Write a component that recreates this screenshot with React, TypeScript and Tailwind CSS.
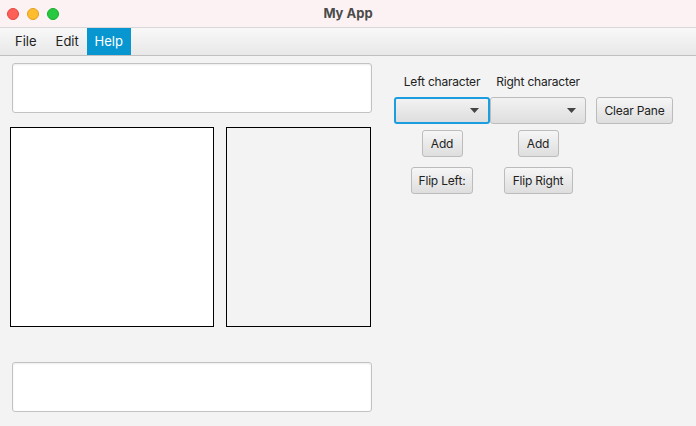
import React from "react";

const font = { fontFamily: "Inter, Roboto, 'Liberation Sans', sans-serif" };

function Combo({ focused }: { focused?: boolean }) {
  return (
    <div
      className={`w-[96px] h-[27px] rounded-[3px] flex items-center justify-end pr-[9px] bg-gradient-to-b from-[#f2f2f2] to-[#dedede] ${
        focused
          ? "border-[2px] border-[#1a9ee0]"
          : "border border-[#bcbcbc]"
      }`}
    >
      <svg width="9" height="5" viewBox="0 0 9 5">
        <path d="M0 0 L9 0 L4.5 5 Z" fill="#444" />
      </svg>
    </div>
  );
}

function Btn({ label, w }: { label: string; w: string }) {
  return (
    <div
      className={`${w} h-[27px] rounded-[3px] border border-[#bcbcbc] bg-gradient-to-b from-[#f6f6f6] to-[#dedede] flex items-center justify-center text-[12px] text-[#222] tracking-[-0.2px]`}
    >
      {label}
    </div>
  );
}

export default function App() {
  return (
    <div className="w-[696px] h-[426px] bg-[#f3f3f3] flex flex-col overflow-hidden" style={font}>
      {/* Title bar */}
      <div className="h-[28px] bg-[#fdf2f3] border-b border-[#d8d8d8] flex items-center relative">
        <div className="flex gap-[8px] pl-[7px]">
          <span className="w-[12px] h-[12px] rounded-full bg-[#fe5f57] border border-[#e2463f]" />
          <span className="w-[12px] h-[12px] rounded-full bg-[#febc2e] border border-[#e1a116]" />
          <span className="w-[12px] h-[12px] rounded-full bg-[#28c840] border border-[#14ae2a]" />
        </div>
        <div className="absolute inset-0 flex items-center justify-center text-[13px] font-bold text-[#4a4a4a]">
          My App
        </div>
      </div>

      {/* Menu bar */}
      <div className="h-[28px] flex items-stretch bg-gradient-to-b from-[#f8f8f8] to-[#e8e8e8] border-b border-[#c0c0c0] text-[13px] text-[#222]">
        <div className="pl-[5px] flex">
          <div className="px-[10px] flex items-center">File</div>
          <div className="pl-[9px] pr-[8px] flex items-center">Edit</div>
          <div className="w-[44px] flex items-center justify-center bg-[#0896d0] text-white">Help</div>
        </div>
      </div>

      {/* Body */}
      <div className="flex-1 flex">
        <div className="w-[386px] flex flex-col pl-[10px] pt-[7px]">
          <div className="ml-[2px] w-[360px] h-[50px] bg-white border border-[#c2c2c2] rounded-[3px] shadow-[inset_0_1px_2px_rgba(0,0,0,0.08)]" />
          <div className="flex gap-[12px] mt-[14px]">
            <div className="w-[204px] h-[200px] bg-white border border-black" />
            <div className="w-[145px] h-[200px] bg-[#f3f3f3] border border-black" />
          </div>
          <div className="ml-[2px] mt-[35px] w-[360px] h-[50px] bg-white border border-[#c2c2c2] rounded-[3px] shadow-[inset_0_1px_2px_rgba(0,0,0,0.08)]" />
        </div>

        <div className="flex flex-col pl-[8px] pt-[18px] text-[#222]">
          <div className="flex text-[12px] h-[16px] items-center tracking-[-0.2px]">
            <div className="w-[96px] text-center">Left character</div>
            <div className="w-[96px] text-center">Right character</div>
          </div>
          <div className="flex items-center mt-[7px]">
            <Combo focused />
            <Combo />
            <div className="ml-[10px]">
              <Btn label="Clear Pane" w="w-[77px]" />
            </div>
          </div>
          <div className="flex mt-[6px]">
            <div className="w-[96px] flex justify-center">
              <Btn label="Add" w="w-[41px]" />
            </div>
            <div className="w-[96px] flex justify-center">
              <Btn label="Add" w="w-[41px]" />
            </div>
          </div>
          <div className="flex mt-[10px]">
            <div className="w-[96px] flex justify-center">
              <Btn label="Flip Left:" w="w-[62px]" />
            </div>
            <div className="w-[96px] flex justify-center">
              <Btn label="Flip Right" w="w-[69px]" />
            </div>
          </div>
        </div>
      </div>
    </div>
  );
}
